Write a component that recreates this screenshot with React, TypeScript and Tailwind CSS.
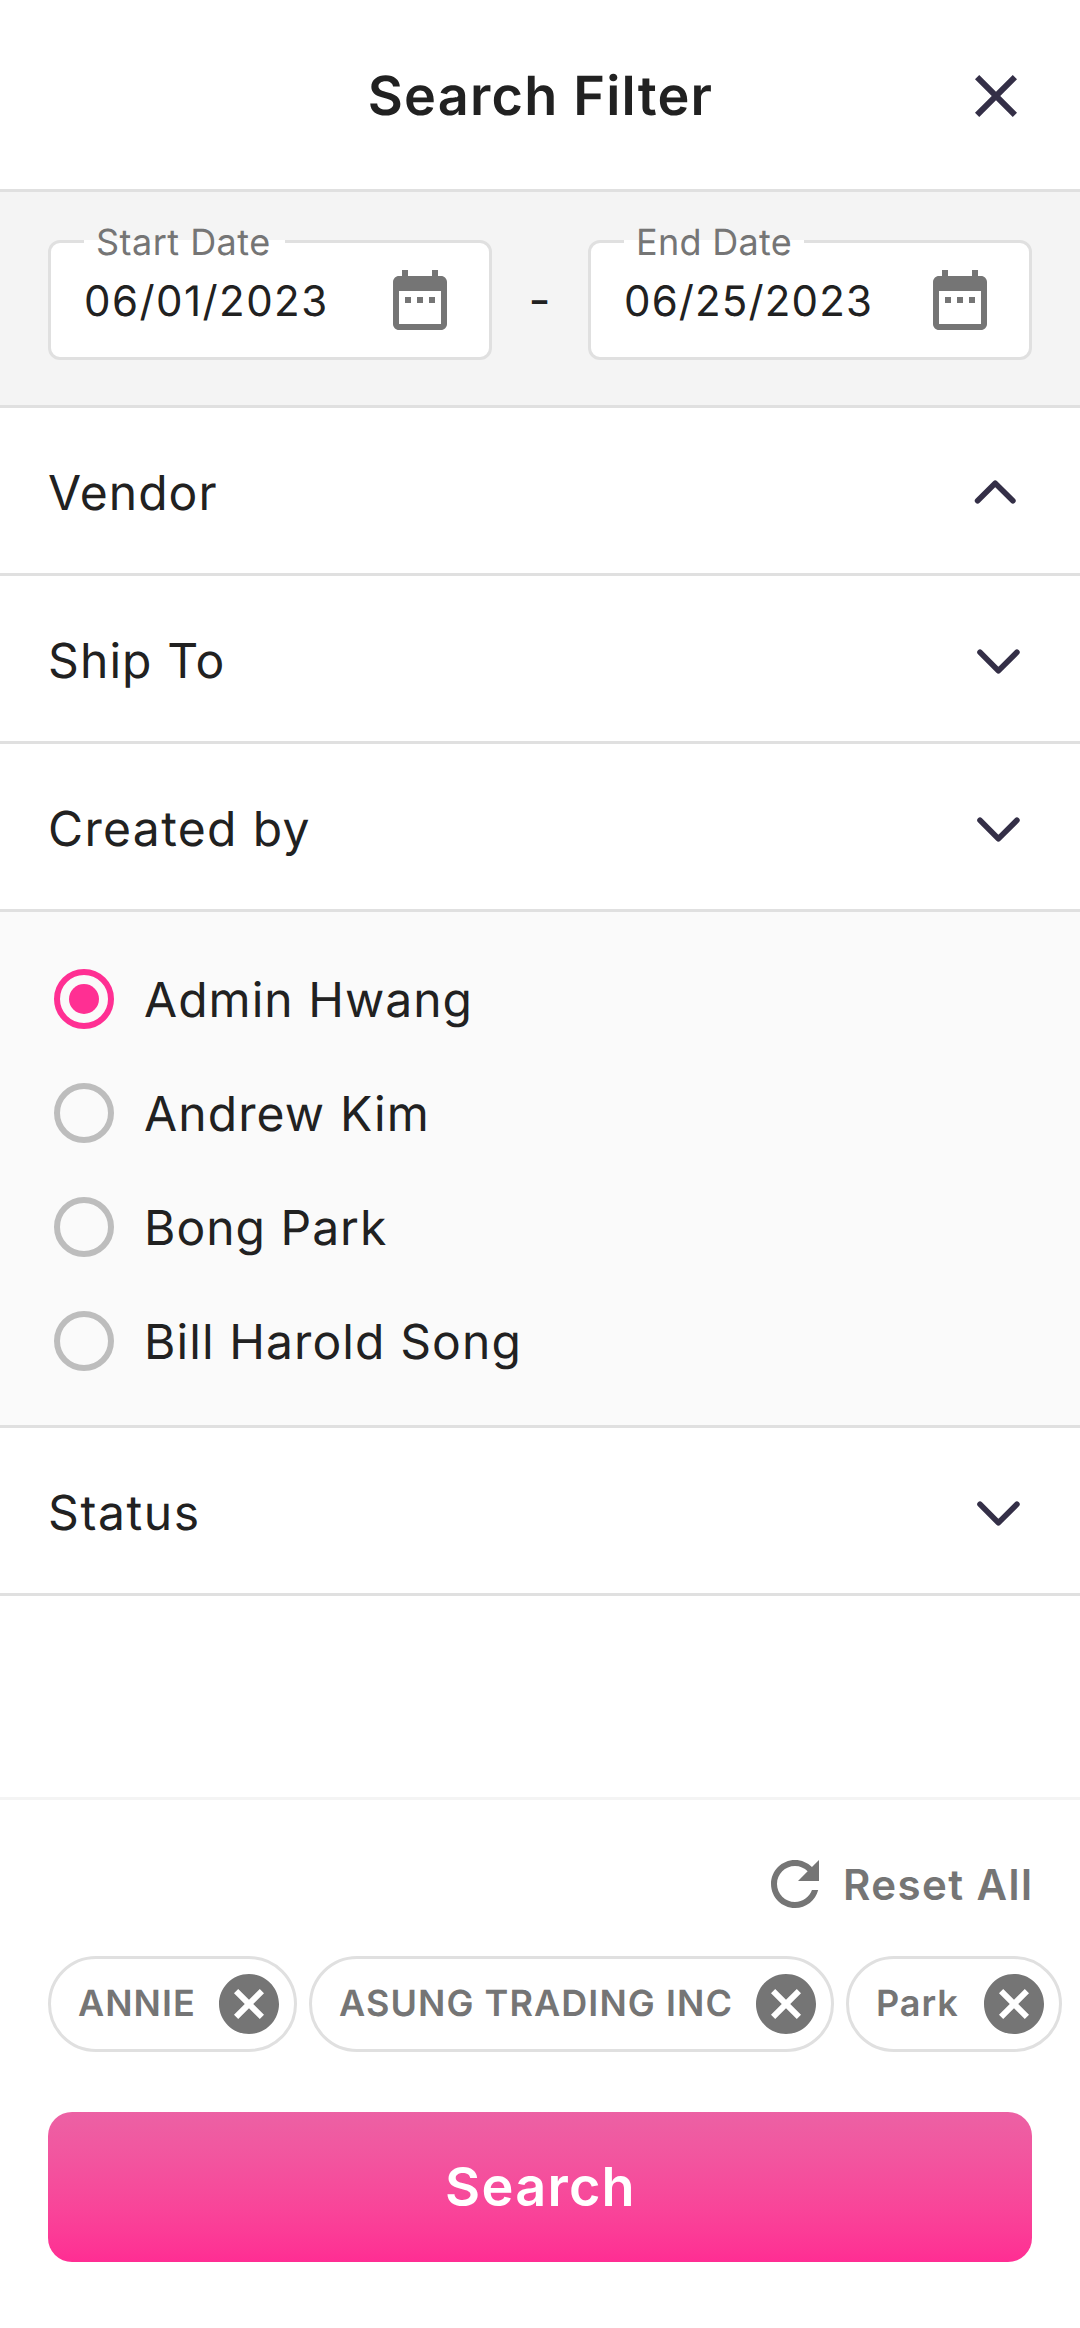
import type { ReactNode } from 'react'

function CloseIcon() {
  return (
    <svg className="size-[72px] fill-[#342f47]" viewBox="0 0 24 24">
      <path d="M19 6.41 17.59 5 12 10.59 6.41 5 5 6.41 10.59 12 5 17.59 6.41 19 12 13.41 17.59 19 19 17.59 13.41 12z" />
    </svg>
  )
}

function CalendarIcon() {
  return (
    <svg className="size-[72px] fill-[#757575]" viewBox="0 0 24 24">
      <path d="M9 11H7v2h2v-2zm4 0h-2v2h2v-2zm4 0h-2v2h2v-2zm2-7h-1V2h-2v2H8V2H6v2H5c-1.11 0-1.99.9-1.99 2L3 20c0 1.1.89 2 2 2h14c1.1 0 2-.9 2-2V6c0-1.1-.9-2-2-2zm0 16H5V9h14v11z" />
    </svg>
  )
}

function RefreshIcon() {
  return (
    <svg className="size-[72px] fill-[#757575]" viewBox="0 0 24 24">
      <path d="M17.65 6.35C16.2 4.9 14.21 4 12 4c-4.42 0-7.99 3.58-7.99 8s3.57 8 7.99 8c3.73 0 6.84-2.55 7.73-6h-2.08c-.82 2.33-3.04 4-5.65 4-3.31 0-6-2.69-6-6s2.69-6 6-6c1.66 0 3.14.69 4.22 1.78L13 11h7V4l-2.35 2.35z" />
    </svg>
  )
}

function CancelIcon() {
  return (
    <svg className="size-[72px] fill-[#757575]" viewBox="0 0 24 24">
      <path d="M12 2C6.47 2 2 6.47 2 12s4.47 10 10 10 10-4.47 10-10S17.53 2 12 2zm5 13.59L15.59 17 12 13.41 8.41 17 7 15.59 10.59 12 7 8.41 8.41 7 12 10.59 15.59 7 17 8.41 13.41 12 17 15.59z" />
    </svg>
  )
}

function Chevron({ open }: { open?: boolean }) {
  return (
    <svg className="h-[73px] w-[72px] fill-none stroke-[#342f47] stroke-[5.6]" viewBox="0 0 72 73" strokeLinecap="round" strokeLinejoin="round">
      <path d={open ? 'M17.6 46.8 35.2 29.2 52.9 46.8' : 'M20 30.3 38.4 48.7 56.9 30.3'} />
    </svg>
  )
}

type DateFieldProps = { label: string; value: string; labelClass: string; valueClass: string }

function DateField({ label, value, labelClass, valueClass }: DateFieldProps) {
  return (
    <div className="relative flex h-[120px] w-[444px] items-center justify-between rounded-[12px] border-[3px] border-[#e0e0e0] bg-white px-[33px]">
      {/* Label sits over a gap in the top border */}
      <div className={`absolute -top-[3px] left-[33px] flex h-[3px] items-center bg-white pl-3 text-[36px] leading-[44px] text-[#757575] ${labelClass}`}>
        <span className="pt-px whitespace-nowrap">{label}</span>
      </div>
      <span className={`pt-1 text-[42px] leading-[52px] ${valueClass}`}>{value}</span>
      <CalendarIcon />
    </div>
  )
}

function Section({ title, open, className }: { title: string; open?: boolean; className: string }) {
  return (
    <div className="flex h-[168px] items-center justify-between border-b-[3px] border-[#e0e0e0] px-12">
      <span className={`pt-[5px] text-[48px] leading-[60px] ${className}`}>{title}</span>
      <Chevron open={open} />
    </div>
  )
}

function Option({ label, checked, className }: { label: string; checked?: boolean; className: string }) {
  return (
    <label className="flex h-[114px] items-center pl-[54px]">
      <span className={`flex size-[60px] items-center justify-center rounded-full border-[6px] ${checked ? 'border-[#ff2f93]' : 'border-[#bdbdbd]'}`}>
        {checked && <span className="size-[30px] rounded-full bg-[#ff2f93]" />}
      </span>
      <span className={`pt-[2px] pl-[30px] text-[48px] leading-[60px] ${className}`}>{label}</span>
    </label>
  )
}

function Chip({ children, className }: { children: ReactNode; className: string }) {
  return (
    <div className={`flex h-24 shrink-0 items-center justify-between rounded-full border-[3px] border-[#e0e0e0] pr-[9px] pl-[27px] text-[36px] leading-[44px] font-semibold text-[#757575] ${className}`}>
      <span className="pb-[2px] whitespace-nowrap">{children}</span>
      <CancelIcon />
    </div>
  )
}

export default function App() {
  return (
    <div className="flex h-[2328px] w-[1080px] flex-col overflow-hidden bg-white font-['Inter',sans-serif] text-[#212121] [text-rendering:geometricPrecision]">
      <header className="grid h-[192px] grid-cols-[1fr_auto_1fr] items-center border-b-[3px] border-[#e0e0e0] px-12 pt-[3px]">
        <h1 className="col-start-2 pt-[2px] pl-px text-[54px] leading-[66px] font-semibold tracking-[1.22px]">Search Filter</h1>
        <button className="justify-self-end" aria-label="Close">
          <CloseIcon />
        </button>
      </header>

      <div className="flex h-[216px] items-center justify-between border-b-[3px] border-[#e0e0e0] bg-[#f4f4f4] px-12 pt-[3px]">
        <DateField label="Start Date" value="06/01/2023" labelClass="w-[201px] tracking-[0.48px]" valueClass="tracking-[1.45px]" />
        <span className="text-[48px] leading-[60px] tracking-[1.05px]">-</span>
        <DateField label="End Date" value="06/25/2023" labelClass="w-[180px] tracking-[0.3px]" valueClass="tracking-[1.15px]" />
      </div>

      <Section title="Vendor" open className="tracking-[1.04px]" />
      <Section title="Ship To" className="tracking-[1.1px]" />
      <Section title="Created by" className="tracking-[1.35px]" />
      <div className="border-b-[3px] border-[#e0e0e0] bg-[#fafafa] pt-[30px] pb-[27px]">
        <Option label="Admin Hwang" checked className="tracking-[1.03px]" />
        <Option label="Andrew Kim" className="tracking-[1.12px]" />
        <Option label="Bong Park" className="tracking-[1px]" />
        <Option label="Bill Harold Song" className="tracking-[1.1px]" />
      </div>
      <Section title="Status" className="tracking-[1.6px]" />

      <footer className="mt-auto flex h-[531px] flex-col border-t-[3px] border-[#f4f4f4] pt-12">
        <button className="flex h-[72px] items-center gap-3 self-end pr-[46.5px]">
          <RefreshIcon />
          <span className="pt-[2px] text-[42px] leading-[52px] font-semibold tracking-[1.45px] text-[#757575]">Reset All</span>
        </button>
        <div className="mt-9 flex gap-3 pl-12">
          <Chip className="w-[249px] tracking-[1.03px]">ANNIE</Chip>
          <Chip className="w-[525px] tracking-[1.08px]">ASUNG TRADING INC</Chip>
          <Chip className="w-[216px] tracking-[0.96px]">Park</Chip>
        </div>
        <button className="mx-12 mt-[60px] h-[150px] rounded-[24px] bg-linear-to-b from-[#ec61a4] to-[#ff2d93] pl-px text-[54px] leading-[66px] font-semibold tracking-[1.24px] text-white">
          Search
        </button>
      </footer>
    </div>
  )
}
